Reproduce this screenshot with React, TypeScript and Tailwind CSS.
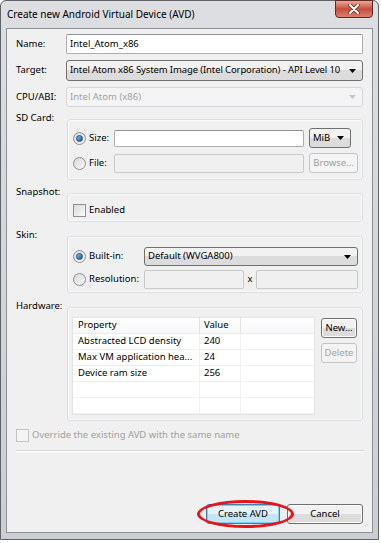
import type { ReactNode } from "react";

const font = { fontFamily: '"Noto Sans", "Liberation Sans", sans-serif' };

function Arrow({ disabled = false }: { disabled?: boolean }) {
    return (
        <svg width="7" height="4" viewBox="0 0 7 4" className="shrink-0">
            <path d="M0 0H7L3.5 4Z" fill={disabled ? "#c4c4c4" : "#000"} />
        </svg>
    );
}

function Select({
    value,
    disabled = false,
    className = "",
}: {
    value: string;
    disabled?: boolean;
    className?: string;
}) {
    return (
        <div
            className={
                "flex items-center justify-between pl-[3px] pr-[6px] rounded-[3px] border " +
                (disabled
                    ? "border-[#d5d7d9] bg-[#f4f4f4] text-[#a3a3a3] "
                    : "border-[#707070] bg-gradient-to-b from-[#f2f2f2] from-50% to-[#dcdcdc] to-50% text-black ") +
                className
            }
        >
            <span className="whitespace-nowrap">{value}</span>
            <Arrow disabled={disabled} />
        </div>
    );
}

function TextBox({
    value = "",
    disabled = false,
    className = "",
}: {
    value?: string;
    disabled?: boolean;
    className?: string;
}) {
    return (
        <div
            className={
                "flex items-center px-[3px] rounded-[2px] border " +
                (disabled
                    ? "border-[#c9c9c9] bg-[#f0f0f0] "
                    : "border-[#abadb3] border-t-[#8f9296] bg-white ") +
                className
            }
        >
            {value}
        </div>
    );
}

function Button({
    children,
    disabled = false,
    primary = false,
    className = "",
}: {
    children: ReactNode;
    disabled?: boolean;
    primary?: boolean;
    className?: string;
}) {
    const look = disabled
        ? "border-[#c2c4c6] bg-[#f4f4f4] text-[#a3a3a3]"
        : primary
          ? "border-[#3c7fb1] bg-gradient-to-b from-[#e5f4fc] from-50% to-[#c4e5f6] to-50% text-black shadow-[inset_0_0_0_1px_#7cd0f5]"
          : "border-[#707070] bg-gradient-to-b from-[#f2f2f2] from-50% to-[#dcdcdc] to-50% text-black shadow-[inset_0_0_0_1px_#fcfcfc]";
    return (
        <div
            className={
                "flex items-center justify-center rounded-[3px] border " +
                look +
                " " +
                className
            }
        >
            {children}
        </div>
    );
}

function Radio({ checked = false }: { checked?: boolean }) {
    return (
        <div className="w-[13px] h-[13px] rounded-full border border-[#8e8f8f] bg-gradient-to-br from-[#d8d8d8] to-[#f8f8f8] flex items-center justify-center shrink-0">
            {checked && (
                <div className="w-[7px] h-[7px] rounded-full bg-gradient-to-br from-[#7cc3ef] to-[#16579a] border border-[#1b4e7e]" />
            )}
        </div>
    );
}

function Check({ disabled = false }: { disabled?: boolean }) {
    return (
        <div
            className={
                "w-[13px] h-[13px] border shrink-0 " +
                (disabled
                    ? "border-[#c4c4c4] bg-[#f4f4f4]"
                    : "border-[#8e8f8f] bg-gradient-to-br from-[#dadada] to-[#fafafa]")
            }
        />
    );
}

function Group({
    label,
    height,
    children,
    className = "",
}: {
    label: string;
    height: string;
    children: ReactNode;
    className?: string;
}) {
    return (
        <div className={"flex items-start " + className}>
            <div className="w-[51px] leading-[12px]">{label}</div>
            <div
                className={
                    "mt-[7px] w-[296px] rounded-[3px] border border-[#dcdfe2] shadow-[inset_0_0_0_1px_#fafafa] " +
                    height
                }
            >
                {children}
            </div>
        </div>
    );
}

const rows = [
    ["Abstracted LCD density", "240"],
    ["Max VM application hea...", "24"],
    ["Device ram size", "256"],
    ["", ""],
    ["", ""],
];

export default function App() {
    return (
        <div
            className="w-[381px] h-[543px] bg-white text-[9.5px] text-black relative"
            style={font}
        >
            <div className="w-[379px] h-[540px] border border-[#5f6266] rounded-t-[6px] bg-gradient-to-b from-[#dcdee1] to-[#cbced2] flex flex-col px-[5px] pb-[6px]">
                {/* title bar */}
                <div className="h-[27px] flex items-start justify-between shrink-0">
                    <div className="pl-[1px] pt-[6px] text-[10px] leading-[14px]">
                        Create new Android Virtual Device (AVD)
                    </div>
                    <div className="-mt-px w-[38px] h-[18px] rounded-b-[4px] border border-[#5e2a24] bg-gradient-to-b from-[#e9a99b] via-[#c74b3c] to-[#d9806d] flex items-center justify-center">
                        <svg width="12" height="10" viewBox="0 0 12 10">
                            <path
                                d="M2 1L10 9M10 1L2 9"
                                stroke="#5a2a22"
                                strokeWidth="3.4"
                                strokeLinecap="round"
                            />
                            <path
                                d="M2 1L10 9M10 1L2 9"
                                stroke="#fff"
                                strokeWidth="2"
                                strokeLinecap="round"
                            />
                        </svg>
                    </div>
                </div>

                {/* client area */}
                <div className="flex-1 border border-[#8d9094] bg-[#f0f0f0] flex flex-col pl-[9px] pr-[9px] pt-[5px] pb-[8px]">
                    <div className="flex items-center h-[20px]">
                        <div className="w-[50px]">Name:</div>
                        <TextBox value="Intel_Atom_x86" className="w-[297px] h-[20px]" />
                    </div>
                    <div className="flex items-center h-[21px] mt-[6px]">
                        <div className="w-[50px]">Target:</div>
                        <Select
                            value="Intel Atom x86 System Image (Intel Corporation) - API Level 10"
                            className="w-[297px] h-[21px] tracking-[-0.12px]"
                        />
                    </div>
                    <div className="flex items-center h-[20px] mt-[6px]">
                        <div className="w-[50px]">CPU/ABI:</div>
                        <Select
                            value="Intel Atom (x86)"
                            disabled
                            className="w-[297px] h-[20px]"
                        />
                    </div>

                    <Group label="SD Card:" height="h-[61px]" className="mt-[5px]">
                        <div className="pl-[5px] pt-[8px] flex flex-col gap-[5px]">
                            <div className="flex items-center h-[20px]">
                                <div className="w-[41px] flex items-center gap-[3px]">
                                    <Radio checked />
                                    <span>Size:</span>
                                </div>
                                <TextBox className="w-[190px] h-[17px]" />
                                <Select value="MiB" className="ml-[5px] w-[42px] h-[20px]" />
                            </div>
                            <div className="flex items-center h-[20px]">
                                <div className="w-[41px] flex items-center gap-[3px]">
                                    <Radio />
                                    <span>File:</span>
                                </div>
                                <TextBox disabled className="w-[190px] h-[19px]" />
                                <Button disabled className="ml-[5px] w-[49px] h-[20px]">
                                    Browse...
                                </Button>
                            </div>
                        </div>
                    </Group>

                    <Group label="Snapshot:" height="h-[29px]" className="mt-[6px]">
                        <div className="pl-[5px] pt-[9px] flex items-center gap-[3px]">
                            <Check />
                            <span>Enabled</span>
                        </div>
                    </Group>

                    <Group label="Skin:" height="h-[57px]" className="mt-[7px]">
                        <div className="pl-[5px] pt-[10px] flex flex-col gap-[4px]">
                            <div className="flex items-center h-[19px]">
                                <div className="w-[71px] flex items-center gap-[3px]">
                                    <Radio checked />
                                    <span>Built-in:</span>
                                </div>
                                <Select
                                    value="Default (WVGA800)"
                                    className="w-[214px] h-[19px]"
                                />
                            </div>
                            <div className="flex items-center h-[19px]">
                                <div className="w-[71px] flex items-center gap-[3px]">
                                    <Radio />
                                    <span>Resolution:</span>
                                </div>
                                <TextBox disabled className="w-[100px] h-[19px]" />
                                <div className="w-[12px] text-center">x</div>
                                <TextBox disabled className="w-[102px] h-[19px]" />
                            </div>
                        </div>
                    </Group>

                    <Group label="Hardware:" height="h-[114px]" className="mt-[7px]">
                        <div className="pl-[4px] pt-[9px] flex items-start">
                            <div className="w-[243px] h-[98px] border border-[#e3e3e3] bg-white flex flex-col">
                                <div className="flex h-[16px] border-b border-[#ececec] bg-gradient-to-b from-white to-[#f6f7f9]">
                                    <div className="w-[127px] pl-[5px] flex items-center border-r border-[#e2e2e2]">
                                        Property
                                    </div>
                                    <div className="w-[41px] pl-[4px] flex items-center border-r border-[#e2e2e2]">
                                        Value
                                    </div>
                                    <div className="flex-1" />
                                </div>
                                {rows.map((r, i) => (
                                    <div
                                        key={i}
                                        className="flex h-[16px] border-b border-[#f0f0f0]"
                                    >
                                        <div className="w-[127px] pl-[5px] flex items-center border-r border-[#f0f0f0] whitespace-nowrap overflow-hidden">
                                            {r[0]}
                                        </div>
                                        <div className="w-[41px] pl-[4px] flex items-center border-r border-[#f0f0f0]">
                                            {r[1]}
                                        </div>
                                        <div className="flex-1" />
                                    </div>
                                ))}
                            </div>
                            <div className="ml-[6px] mt-[1px] flex flex-col gap-[5px]">
                                <Button className="w-[36px] h-[20px]">New...</Button>
                                <Button disabled className="w-[36px] h-[20px]">
                                    Delete
                                </Button>
                            </div>
                        </div>
                    </Group>

                    <div className="mt-[8px] flex items-center gap-[3px] h-[13px] text-[#a0a0a0]">
                        <Check disabled />
                        <span>Override the existing AVD with the same name</span>
                    </div>

                    <div className="mt-[8px] mr-[-1px] border-t border-[#d5d5d5] border-b border-b-white" />

                    <div className="flex-1" />

                    <div className="flex justify-end gap-[7px]">
                        <Button primary className="w-[74px] h-[20px]">
                            Create AVD
                        </Button>
                        <Button className="w-[76px] h-[20px]">Cancel</Button>
                    </div>
                </div>
            </div>

            {/* red annotation ring around the default button */}
            <div className="absolute left-[197px] top-[500px] w-[97px] h-[28px] rounded-[50%] border-[3px] border-[#e8141b] pointer-events-none" />
        </div>
    );
}
